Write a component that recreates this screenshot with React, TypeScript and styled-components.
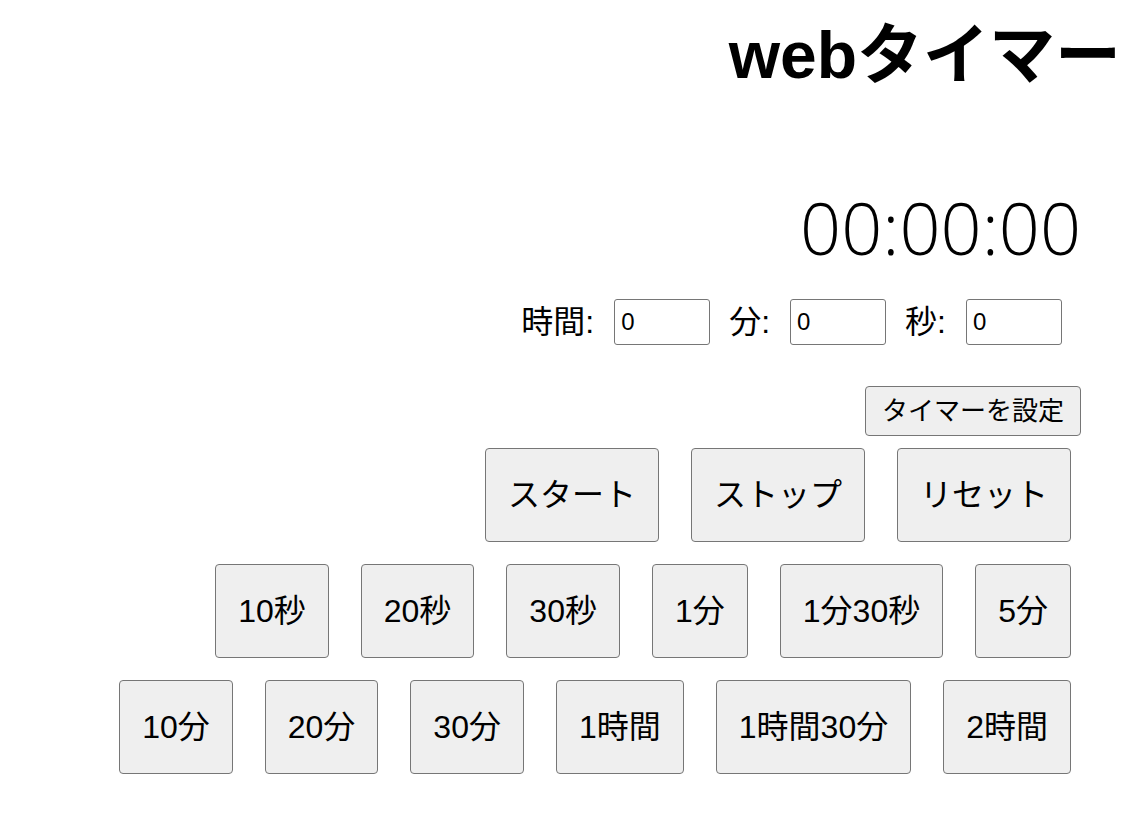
import React from "react";
import styled, { createGlobalStyle } from "styled-components";

const GlobalStyle = createGlobalStyle`
  html, body {
    margin: 0;
    padding: 0;
    background: #ffffff;
    color: #000000;
    font-family: "Liberation Sans", "Noto Sans CJK JP", sans-serif;
  }
`;

const Page = styled.main`
  display: flex;
  flex-direction: column;
  align-items: flex-end;
  padding-top: 15px;
`;

const Title = styled.h1`
  margin: 0 17px 0 0;
  font: bold 66px/80px "Liberation Sans", "Noto Sans CJK JP", sans-serif;
`;

const TimerDisplay = styled.div`
  margin: 92px 57px 0 0;
  font: 300 72px/80px "Open Sans", "Liberation Sans", sans-serif;
`;

const InputRow = styled.div`
  display: flex;
  align-items: center;
  gap: 19px;
  margin: 32px 76px 0 0;
`;

const Field = styled.label`
  display: flex;
  align-items: center;
  gap: 20px;
  font: 32px/45px "Liberation Sans", "Noto Sans CJK JP", sans-serif;
`;

const NumberInput = styled.input`
  box-sizing: border-box;
  width: 96px;
  height: 46px;
  padding: 0 6px;
  border: 1px solid #767676;
  border-radius: 3px;
  background: #ffffff;
  font: 24px "Liberation Sans", sans-serif;
  color: #000;
`;

const SetButton = styled.button`
  margin: 41px 57px 0 0;
  padding: 0 16px;
  border: 1px solid #767676;
  border-radius: 4px;
  background: #efefef;
  color: #000;
  font: 26px/48px "Liberation Sans", "Noto Sans CJK JP", sans-serif;
`;

const ButtonRow = styled.div<{ $top: number }>`
  display: flex;
  gap: 32px;
  margin: ${(p) => p.$top}px 67px 0 0;
`;

const BigButton = styled.button`
  padding: 22px;
  border: 1px solid #767676;
  border-radius: 4px;
  background: #efefef;
  color: #000;
  font: 32px/48px "Liberation Sans", "Noto Sans CJK JP", sans-serif;
  white-space: nowrap;
`;

const controls = ["スタート", "ストップ", "リセット"];
const presetsShort = ["10秒", "20秒", "30秒", "1分", "1分30秒", "5分"];
const presetsLong = ["10分", "20分", "30分", "1時間", "1時間30分", "2時間"];

export default function App() {
  return (
    <>
      <GlobalStyle />
      <Page>
        <Title>webタイマー</Title>
        <TimerDisplay>00:00:00</TimerDisplay>
        <InputRow>
          <Field>
            時間:
            <NumberInput type="number" defaultValue={0} />
          </Field>
          <Field>
            分:
            <NumberInput type="number" defaultValue={0} />
          </Field>
          <Field>
            秒:
            <NumberInput type="number" defaultValue={0} />
          </Field>
        </InputRow>
        <SetButton>タイマーを設定</SetButton>
        <ButtonRow $top={12}>
          {controls.map((c) => (
            <BigButton key={c}>{c}</BigButton>
          ))}
        </ButtonRow>
        <ButtonRow $top={22}>
          {presetsShort.map((c) => (
            <BigButton key={c}>{c}</BigButton>
          ))}
        </ButtonRow>
        <ButtonRow $top={22}>
          {presetsLong.map((c) => (
            <BigButton key={c}>{c}</BigButton>
          ))}
        </ButtonRow>
      </Page>
    </>
  );
}
